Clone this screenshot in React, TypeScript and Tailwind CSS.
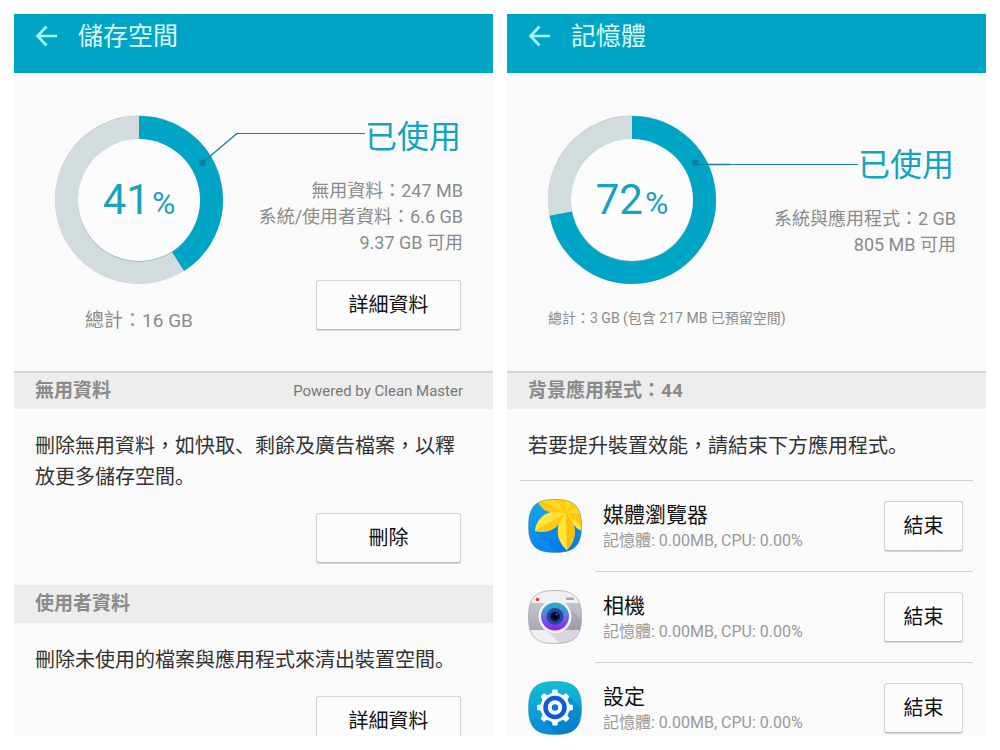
import type { ReactNode } from "react";

const OUTER_RADIUS = 84;
const RING_WIDTH = 24;
const RING_RADIUS = OUTER_RADIUS - RING_WIDTH / 2;

// pie wedge end on a circle, clockwise from the top
const pointAt = (percent: number, radius: number) => {
  const angle = (percent / 100) * Math.PI * 2;
  return [85 + radius * Math.sin(angle), 85 - radius * Math.cos(angle)];
};

const arcPath = (percent: number) => {
  const [x, y] = pointAt(percent, RING_RADIUS);
  return `M85 ${85 - RING_RADIUS} A${RING_RADIUS} ${RING_RADIUS} 0 ${
    percent > 50 ? 1 : 0
  } 1 ${x} ${y}`;
};

const Donut = ({ percent, leader }: { percent: number; leader: string }) => {
  return (
    <div className="relative h-[170px] w-[170px]">
      <svg
        className="block overflow-visible"
        width="170"
        height="170"
        viewBox="0 0 170 170"
        fill="none"
        aria-hidden="true"
      >
        <circle cx="85" cy="84.500" r={OUTER_RADIUS} fill="#b3bdbe" />
        <circle cx="85" cy="85" r={RING_RADIUS} stroke="#d2dbdd" strokeWidth={RING_WIDTH} />
        <path d={arcPath(percent)} stroke="#00a5c5" strokeWidth={RING_WIDTH} />
        <circle cx="85" cy="86" r="61" fill="#8fa3a6" fillOpacity="0.6" />
        <circle cx="85" cy="85" r="61" fill="#fcfcfc" />
        <path d={leader} stroke="#16829b" strokeWidth="1.300" />
        <circle cx="148.500" cy="48" r="3.300" fill="#0a829d" />
      </svg>
      <div className="absolute inset-0 flex items-baseline justify-center gap-0.5 pt-[55px] text-[#1ba1bd]">
        <span className="text-[42px] leading-[60px]">{percent}</span>
        <span className="text-[32px] leading-[60px]">%</span>
      </div>
    </div>
  );
};

const Button = ({ wide, children }: { wide?: boolean; children: ReactNode }) => {
  return (
    <button
      type="button"
      className={`block h-[50px] shrink-0 rounded-[3px] border border-[#d2d2d2] border-b-[#bdbdbd] bg-[#fcfcfc] text-xl text-[#111] shadow-[0_1px_1px_rgba(0,0,0,0.15)] ${
        wide ? "w-[145px]" : "w-[79px]"
      }`}
    >
      {children}
    </button>
  );
};

const Header = ({ title }: { title: string }) => {
  return (
    <header className="flex h-[59px] shrink-0 items-start gap-5 bg-[#00a5c5] pt-2 pl-[21px]">
      <button type="button" aria-label="返回" className="flex h-7 items-center">
        <svg width="23" height="22" viewBox="0 0 23 22" fill="none" stroke="#a4f6f6" strokeWidth="2.600">
          <path d="M11.500 1.500 L2.500 11 L11.500 20.500 M2.500 11 H22" />
        </svg>
      </button>
      <h1 className="text-[25px] leading-[30px] text-[#dcfbfb]">{title}</h1>
    </header>
  );
};

const SectionBar = ({ title, note, first }: { title: string; note?: string; first?: boolean }) => {
  return (
    <div
      className={`flex h-[38px] shrink-0 items-center justify-between bg-[#ededed] pr-[30px] pl-[21px] ${
        first ? "border-t-2 border-[#d3d3d3]" : ""
      }`}
    >
      <h2 className="text-[19px] leading-7 font-bold text-[#8a8a8a]">{title}</h2>
      {note ? <span className="text-[15px] text-[#777]">{note}</span> : null}
    </div>
  );
};

// this mark sits at the left of its box, unlike the centred TC form
const Mark = ({ children }: { children: string }) => (
  <span className="font-['Noto_Sans_CJK_JP',sans-serif] leading-none">{children}</span>
);

const GalleryIcon = () => (
  <svg width="54" height="54" viewBox="0 0 54 54" aria-hidden="true">
    <defs>
      <linearGradient id="sky" x1="0" y1="0" x2="0" y2="1">
        <stop offset="0" stopColor="#19a6f0" />
        <stop offset="1" stopColor="#0784f3" />
      </linearGradient>
      <clipPath id="tile">
        <path d="M27 .5 C46 .5 53.500 7 53.500 27 C53.500 47 46 53.500 27 53.500 C8 53.500 .5 47 .5 27 C.5 7 8 .5 27 .5Z" />
      </clipPath>
    </defs>
    <g clipPath="url(#tile)">
      <rect width="54" height="54" fill="url(#sky)" />
      <path d="M7 32 L29 54 H54 V30 L38 14Z" fill="#0469cf" fillOpacity="0.3" />
      <path d="M9 0 C12 8 16 12 23 13 C14 16 8 22 7 32 C17 34 25 32 31 25 C28 35 31 44 39 51 C46 44 49 34 45 24 C47 28 50 31 55 32 V0Z" fill="#ffd91a" />
      <path d="M38 14 L23 13 C14 16 8 22 7 32Z" fill="#ffe43a" />
      <path d="M38 14 L7 32 C17 34 25 32 31 25Z" fill="#fdca0f" />
      <path d="M38 14 L31 25 C28 35 31 44 39 51Z" fill="#ffe43a" />
      <path d="M38 14 L39 51 C46 44 49 34 45 24Z" fill="#fcbd0c" />
      <path d="M38 14 L45 24 C47 28 50 31 55 32 V29Z" fill="#ffe43a" />
      <path d="M38 14 L55 29 V14Z" fill="#fdca0f" />
      <path d="M38 14 L9 0 C12 8 16 12 23 13Z" fill="#fdca0f" />
      <path d="M38 14 L26 0 H37Z" fill="#fdca0f" />
      <path d="M38 14 L46 0 H55 V5Z" fill="#fdca0f" />
    </g>
    <path d="M27 .5 C46 .5 53.500 7 53.500 27 C53.500 47 46 53.500 27 53.500 C8 53.500 .5 47 .5 27 C.5 7 8 .5 27 .5Z" fill="none" stroke="#5b7c74" strokeOpacity="0.4" />
  </svg>
);

const CameraIcon = () => (
  <svg width="54" height="54" viewBox="0 0 54 54" aria-hidden="true">
    <defs>
      <linearGradient id="lens" x1="0" y1="0" x2="0" y2="1">
        <stop offset="0" stopColor="#1fb3c6" />
        <stop offset="0.450" stopColor="#5e7be4" />
        <stop offset="1" stopColor="#9a16f5" />
      </linearGradient>
      <linearGradient id="leather" x1="0" y1="0" x2="0" y2="1">
        <stop offset="0" stopColor="#c4c2cc" />
        <stop offset="1" stopColor="#a9a7b3" />
      </linearGradient>
    </defs>
    <g clipPath="url(#tile)">
      <rect width="54" height="54" fill="#f0eff3" />
      <rect y="13" width="54" height="27" fill="url(#leather)" />
      <path d="M16 38 L38 15 L54 31 V54 H32Z" fill="#77758a" fillOpacity="0.2" />
    </g>
    <path d="M27 .5 C46 .5 53.500 7 53.500 27 C53.500 47 46 53.500 27 53.500 C8 53.500 .5 47 .5 27 C.5 7 8 .5 27 .5Z" fill="none" stroke="#a5a3ac" strokeOpacity="0.7" />
    <circle cx="9.500" cy="9.500" r="1.800" fill="#e2472a" />
    <rect x="38" y="7.500" width="8" height="2.500" rx="1" fill="#a5a4af" />
    <circle cx="27" cy="26.500" r="16.500" fill="#f6f5f9" />
    <circle cx="27" cy="26.500" r="14" fill="url(#lens)" />
    <circle cx="27" cy="26.500" r="8.500" fill="#254a9d" />
    <circle cx="27" cy="26.500" r="5" fill="#0d1a4b" />
    <circle cx="27" cy="26.500" r="3" fill="#030511" />
    <circle cx="28.500" cy="24.500" r="0.800" fill="#8793c3" />
  </svg>
);

const SettingsIcon = () => (
  <svg width="54" height="54" viewBox="0 0 54 54" aria-hidden="true">
    <defs>
      <linearGradient id="sea" x1="0" y1="0" x2="0" y2="1">
        <stop offset="0" stopColor="#11bfd3" />
        <stop offset="1" stopColor="#0787dc" />
      </linearGradient>
    </defs>
    <g clipPath="url(#tile)">
      <rect width="54" height="54" fill="url(#sea)" />
      <path d="M14 38 L40 14 L54 28 V54 H30Z" fill="#0567b5" fillOpacity="0.3" />
    </g>
    <path d="M27 .5 C46 .5 53.500 7 53.500 27 C53.500 47 46 53.500 27 53.500 C8 53.500 .5 47 .5 27 C.5 7 8 .5 27 .5Z" fill="none" stroke="#0d7f9b" strokeOpacity="0.4" />
    <g fill="#f4fdff">
      <circle cx="27" cy="26.500" r="14.500" />
      {[0, 45, 90, 135, 180, 225, 270, 315].map((angle) => (
        <path
          key={angle}
          d="M22 14 L24.300 11 V9.500 Q24.300 8.500 25.300 8.500 H28.700 Q29.700 8.500 29.700 9.500 V11 L32 14Z"
          transform={`rotate(${angle} 27 26.500)`}
        />
      ))}
    </g>
    <circle cx="27" cy="26.500" r="9.500" fill="none" stroke="#1258d6" strokeWidth="4.500" />
    <circle cx="27" cy="26.500" r="3.200" fill="#1673dd" />
  </svg>
);

const apps = [
  { name: "媒體瀏覽器", icon: <GalleryIcon /> },
  { name: "相機", icon: <CameraIcon /> },
  { name: "設定", icon: <SettingsIcon /> },
];

const StoragePanel = () => {
  return (
    <section className="flex min-w-0 flex-1 flex-col overflow-hidden bg-[#fafafa]">
      <Header title="儲存空間" />
      <div className="flex h-[298px] shrink-0 items-start gap-[13px] pt-[42px] pr-[30px] pl-10">
        <div className="flex flex-col items-center gap-[22px]">
          <Donut percent={41} leader="M148 48 L183 18.500 H184" />
          <p className="text-[19px] leading-7 text-[#8b8b8b]">總計：16 GB</p>
        </div>
        <div className="flex flex-1 flex-col items-end pt-0.5">
          <div className="flex w-full items-start pr-0.5">
            <span className="mt-4 h-px flex-1 bg-[#16829b]" />
            <h2 className="text-[32px] leading-10 text-[#14a3c0]">已使用</h2>
          </div>
          <p className="mt-[21px] text-right text-lg leading-[26px] whitespace-nowrap text-[#8b8b8b]">
            無用資料：247 MB
            <br />
            系統/使用者資料：6.6 GB
            <br />
            9.37 GB 可用
          </p>
          <div className="mt-6 mr-0.5">
            <Button wide>詳細資料</Button>
          </div>
        </div>
      </div>
      <SectionBar title="無用資料" note="Powered by Clean Master" first />
      <div className="flex shrink-0 flex-col gap-5 pt-[22px] pr-5 pb-[22px] pl-[21px]">
        <p className="text-xl leading-[31px] text-[#333]">
          刪除無用資料，如快取<Mark>、</Mark>剩餘及廣告檔案，以釋
          <br />
          放更多儲存空間<Mark>。</Mark>
        </p>
        <div className="mr-3 self-end">
          <Button wide>刪除</Button>
        </div>
      </div>
      <SectionBar title="使用者資料" />
      <div className="flex shrink-0 flex-col gap-5 pt-[22px] pr-5 pb-[22px] pl-[21px]">
        <p className="text-xl leading-[31px] text-[#333]">
          刪除未使用的檔案與應用程式來清出裝置空間<Mark>。</Mark>
        </p>
        <div className="mr-3 self-end">
          <Button wide>詳細資料</Button>
        </div>
      </div>
    </section>
  );
};

const MemoryPanel = () => {
  return (
    <section className="flex min-w-0 flex-1 flex-col overflow-hidden bg-[#fafafa]">
      <Header title="記憶體" />
      <div className="h-[298px] shrink-0 pt-[42px] pr-[30px] pl-10">
        <div className="flex items-start gap-[13px]">
          <Donut percent={72} leader="M148 49.500 H183" />
          <div className="flex flex-1 flex-col items-end pt-[30px]">
            <div className="flex w-full items-start pr-0.5">
              <span className="mt-[19px] h-px flex-1 bg-[#16829b]" />
              <h2 className="text-[32px] leading-10 text-[#14a3c0]">已使用</h2>
            </div>
            <p className="mt-[21px] text-right text-lg leading-[26px] whitespace-nowrap text-[#8b8b8b]">
              系統與應用程式：2 GB
              <br />
              805 MB 可用
            </p>
          </div>
        </div>
        <p className="mt-[19px] pl-px text-sm leading-7 text-[#8b8b8b]">
          總計：3 GB (包含 217 MB 已預留空間)
        </p>
      </div>
      <SectionBar title="背景應用程式：44" first />
      <p className="shrink-0 pt-[22px] pb-[18px] pl-[21px] text-xl leading-[31px] text-[#333]">
        若要提升裝置效能，請結束下方應用程式<Mark>。</Mark>
      </p>
      <ul className="mx-[13px] shrink-0 border-t border-[#d0d0d0]">
        {apps.map((app, index) => (
          <li key={app.name} className="flex items-center gap-[13px] pl-2">
            {app.icon}
            <div
              className={`flex flex-1 items-center justify-between pr-2.5 pl-2 ${
                index > 0 ? "h-[91px] border-t border-[#d0d0d0]" : "h-[90px]"
              }`}
            >
              <div className="pt-0.5">
                <h3 className="text-[21px] leading-7 text-[#111]">{app.name}</h3>
                <p className="text-base leading-6 text-[#999]">記憶體: 0.00MB, CPU: 0.00%</p>
              </div>
              <Button>結束</Button>
            </div>
          </li>
        ))}
      </ul>
    </section>
  );
};

export default function App() {
  return (
    <main className="flex h-screen gap-3.5 overflow-hidden bg-white p-3.5 font-[Roboto,'Noto_Sans_CJK_TC',sans-serif]">
      <StoragePanel />
      <MemoryPanel />
    </main>
  );
}
